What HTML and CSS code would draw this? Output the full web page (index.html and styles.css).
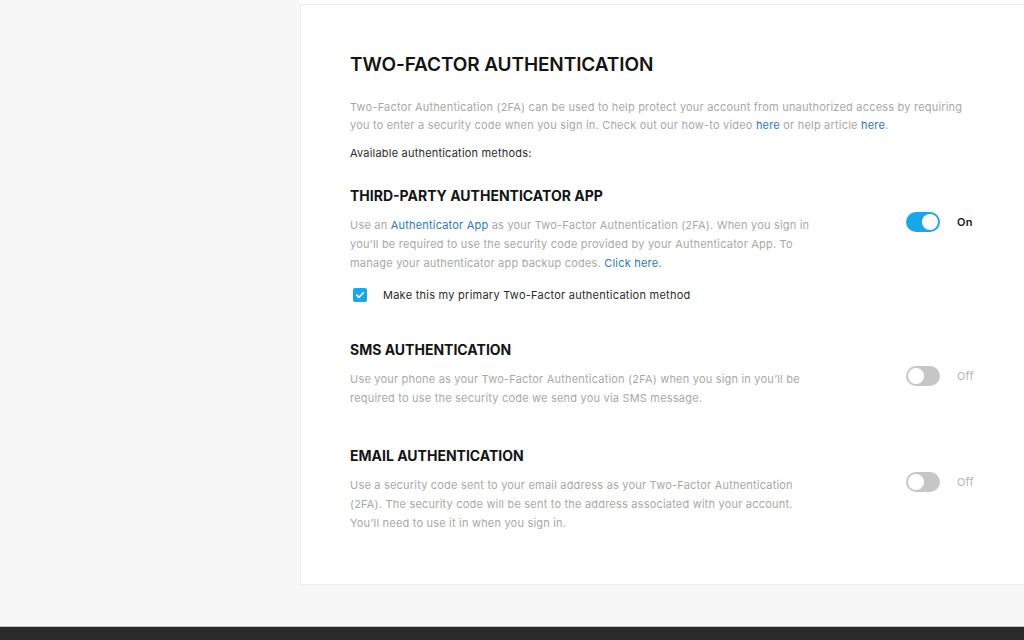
FILE: index.html
```html
<!DOCTYPE html>
<html lang="en">
<head>
<meta charset="utf-8">
<title>Two-Factor Authentication</title>
<link rel="stylesheet" href="styles.css">
</head>
<body>
<div class="page">
  <aside class="side"></aside>
  <main class="panel">
    <div class="prev"></div>
    <section class="card">
      <h1 class="title">TWO-FACTOR AUTHENTICATION</h1>
      <p class="intro">Two-Factor Authentication (2FA) can be used to help protect your account from unauthorized access by requiring you to enter a security code when you sign in. Check out our how-to video <a class="link" href="#">here</a> or help article <a class="link" href="#">here</a>.</p>
      <p class="avail">Available authentication methods:</p>

      <div class="method m-app">
        <h2 class="m-title">THIRD-PARTY AUTHENTICATOR APP</h2>
        <div class="m-row">
          <p class="m-desc">Use an <a class="link" href="#">Authenticator App</a> as your Two-Factor Authentication (2FA). When you sign in you’ll be required to use the security code provided by your Authenticator App. To manage your authenticator app backup codes. <a class="link" href="#">Click here.</a></p>
          <div class="switch-wrap">
            <span class="switch on"><span class="knob"></span></span>
            <span class="state on">On</span>
          </div>
        </div>
        <label class="check-row">
          <span class="checkbox">
            <svg width="10" height="10" viewBox="0 0 10 10"><path d="M1.8 5.2 L4 7.3 L8.3 2.8" fill="none" stroke="#fff" stroke-width="1.6" stroke-linecap="round" stroke-linejoin="round"/></svg>
          </span>
          <span class="check-label">Make this my primary Two-Factor authentication method</span>
        </label>
      </div>

      <div class="method m-sms">
        <h2 class="m-title">SMS AUTHENTICATION</h2>
        <div class="m-row">
          <p class="m-desc">Use your phone as your Two-Factor Authentication (2FA) when you sign in you’ll be required to use the security code we send you via SMS message.</p>
          <div class="switch-wrap">
            <span class="switch"><span class="knob"></span></span>
            <span class="state">Off</span>
          </div>
        </div>
      </div>

      <div class="method m-email">
        <h2 class="m-title">EMAIL AUTHENTICATION</h2>
        <div class="m-row">
          <p class="m-desc">Use a security code sent to your email address as your Two-Factor Authentication (2FA). The security code will be sent to the address associated with your account. You’ll need to use it in when you sign in.</p>
          <div class="switch-wrap">
            <span class="switch"><span class="knob"></span></span>
            <span class="state">Off</span>
          </div>
        </div>
      </div>
    </section>
  </main>
</div>
<footer class="footer"></footer>
</body>
</html>
```

FILE: styles.css
```css
* { box-sizing: border-box; }
html, body { margin: 0; padding: 0; }
body {
  background: #f7f7f7;
  font-family: Inter, "Noto Sans", "Liberation Sans", sans-serif;
  color: #a8a8a8;
  width: 1024px;
  height: 640px;
  overflow: hidden;
}
.page {
  display: flex;
  height: 626px;
}
.side { width: 300px; flex: none; }
.panel {
  flex: 1;
  display: flex;
  flex-direction: column;
  align-self: flex-start;
}
.prev {
  height: 5px;
  background: #fff;
  border-bottom: 1px solid #ebebeb;
}
.card {
  background: #fff;
  border-left: 1px solid #ececec;
  border-bottom: 1px solid #ececec;
  padding: 48px 0 51px 49px;
}
.title {
  margin: 0;
  font-size: 19px;
  line-height: 24px;
  font-weight: 600;
  letter-spacing: -0.1px;
  color: #141414;
}
.intro {
  margin: 21px 0 0;
  width: 622px;
  font-size: 11px;
  line-height: 18px;
  letter-spacing: 0.2px;
}
.link { color: #2f78b5; text-decoration: none; }
.avail {
  margin: 10px 0 0;
  font-size: 11px;
  line-height: 18px;
  color: #2b2b2b;
  letter-spacing: 0.2px;
}
.method { margin-top: 24px; }
.m-sms { margin-top: 36px; }
.m-email { margin-top: 38px; }
.m-title {
  margin: 0;
  font-size: 14px;
  line-height: 20px;
  font-weight: 700;
  letter-spacing: 0;
  color: #141414;
}
.m-row {
  display: flex;
  align-items: flex-start;
  margin-top: 10px;
}
.m-desc {
  margin: 0;
  width: 556px;
  padding-right: 88px;
  font-size: 11px;
  line-height: 19px;
  letter-spacing: 0.2px;
}
.switch-wrap {
  display: flex;
  align-items: center;
  gap: 17px;
  margin-top: -4px;
}
.switch {
  position: relative;
  width: 34px;
  height: 20px;
  border-radius: 10px;
  background: #c6c6c6;
  display: block;
}
.switch.on { background: #1ba6e8; }
.knob {
  position: absolute;
  top: 2px;
  left: 2px;
  width: 16px;
  height: 16px;
  border-radius: 50%;
  background: #fff;
}
.switch.on .knob { left: 16px; }
.state {
  font-size: 11px;
  color: #b3b3b3;
  letter-spacing: 0.2px;
}
.state.on { color: #1a1a1a; font-weight: 600; }
.check-row {
  display: flex;
  align-items: center;
  gap: 16px;
  margin: 13px 0 0 3px;
  height: 18px;
}
.checkbox {
  width: 14px;
  height: 14px;
  border-radius: 2px;
  background: #1ba6e8;
  display: flex;
  align-items: center;
  justify-content: center;
}
.check-label {
  font-size: 11px;
  color: #2b2b2b;
  letter-spacing: 0.25px;
}
.footer {
  height: 14px;
  background: #2a2a2a;
  border-top: 1px solid #bdbdbd;
}
```
